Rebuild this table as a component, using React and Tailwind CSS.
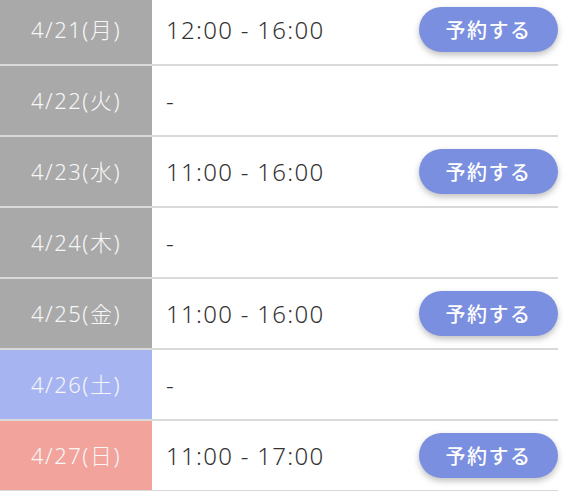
import React from "react";

const rows = [
  { date: "4/21(月)", time: "12:00 - 16:00", bg: "bg-[#a9a9a9]", btn: true },
  { date: "4/22(火)", time: "-", bg: "bg-[#a9a9a9]", btn: false },
  { date: "4/23(水)", time: "11:00 - 16:00", bg: "bg-[#a9a9a9]", btn: true },
  { date: "4/24(木)", time: "-", bg: "bg-[#a9a9a9]", btn: false },
  { date: "4/25(金)", time: "11:00 - 16:00", bg: "bg-[#a9a9a9]", btn: true },
  { date: "4/26(土)", time: "-", bg: "bg-[#a6b5f2]", btn: false },
  { date: "4/27(日)", time: "11:00 - 17:00", bg: "bg-[#f2a39c]", btn: true },
];

export default function App() {
  return (
    <div
      className="w-[576px] h-[491px] overflow-hidden bg-white"
      style={{ fontFamily: '"Noto Sans", "Noto Sans CJK JP", sans-serif' }}
    >
      <div className="w-[558px] -mt-[5px] flex flex-col">
        {rows.map((r, i) => (
          <div key={i} className="flex h-[71px] border-b-2 border-[#d9d9d9]">
            <div
              className={`w-[152px] shrink-0 flex items-center justify-center ${r.bg} text-[22px] tracking-[1.5px] font-light text-[#f7f7f7]`}
            >
              {r.date}
            </div>
            <div className="flex-1 flex items-center pl-[14px] text-[24px] tracking-[1.3px] font-light text-[#333]">
              {r.time}
            </div>
            {r.btn && (
              <div className="flex items-center">
                <button
                  className="w-[139px] h-[45px] rounded-full bg-[#7b8fe0] text-white text-[20px] font-medium shadow-[0_3px_6px_rgba(0,0,0,0.25)] tracking-[1.5px]"
                  style={{ fontFamily: '"Noto Sans CJK JP", sans-serif' }}
                >
                  予約する
                </button>
              </div>
            )}
          </div>
        ))}
      </div>
    </div>
  );
}
